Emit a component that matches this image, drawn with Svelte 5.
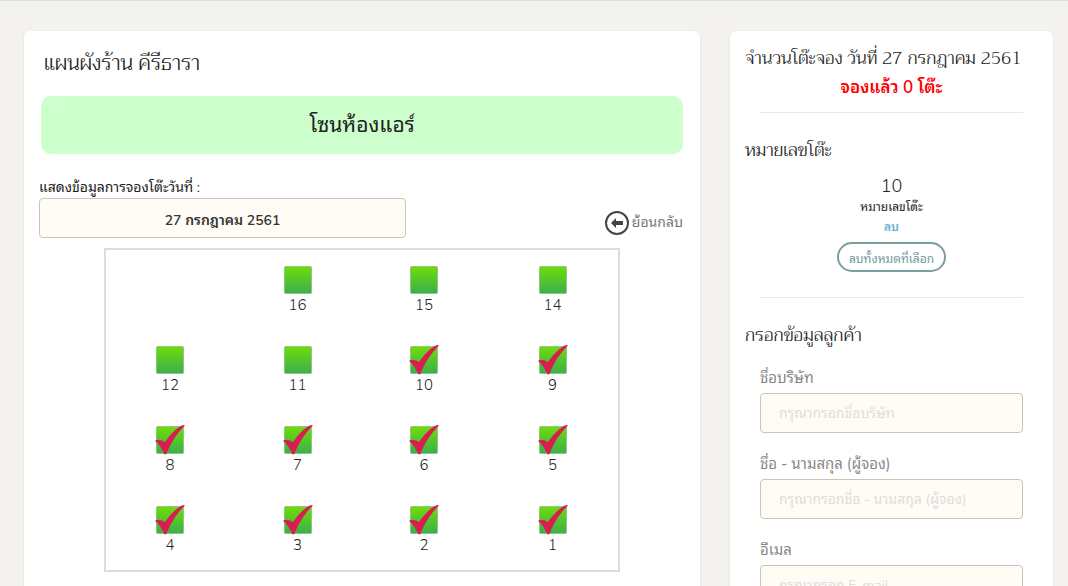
<script lang="ts">
  type Seat = { no: number; checked: boolean } | null;
  type Field = { id: string; label: string; placeholder: string };

  let date = $state('27 กรกฎาคม 2561');

  // null leaves an empty spot on the floor plan
  let seats: Seat[] = $state([
    null,
    { no: 16, checked: false },
    { no: 15, checked: false },
    { no: 14, checked: false },
    { no: 12, checked: false },
    { no: 11, checked: false },
    { no: 10, checked: true },
    { no: 9, checked: true },
    { no: 8, checked: true },
    { no: 7, checked: true },
    { no: 6, checked: true },
    { no: 5, checked: true },
    { no: 4, checked: true },
    { no: 3, checked: true },
    { no: 2, checked: true },
    { no: 1, checked: true }
  ]);

  const fields: Field[] = [
    { id: 'company', label: 'ชื่อบริษัท', placeholder: 'กรุณากรอกชื่อบริษัท' },
    { id: 'name', label: 'ชื่อ - นามสกุล (ผู้จอง)', placeholder: 'กรุณากรอกชื่อ - นามสกุล (ผู้จอง)' },
    { id: 'email', label: 'อีเมล', placeholder: 'กรุณากรอก E-mail' }
  ];
</script>

<div class="page">
  <main class="card plan">
    <h1>แผนผังร้าน คีรีธารา</h1>
    <h2 class="zone">โซนห้องแอร์</h2>

    <div class="toolbar">
      <div class="date">
        <label for="date">แสดงข้อมูลการจองโต๊ะวันที่ :</label>
        <input id="date" class="box" type="text" bind:value={date} />
      </div>
      <a class="back" href="#back">
        <svg width="26" height="26" viewBox="0 0 26 26" aria-hidden="true">
          <circle cx="13" cy="13" r="11" fill="none" stroke="#444" stroke-width="2" />
          <path d="M7 13 L12 8 V11 H19 V15 H12 V18 Z" fill="#444" />
        </svg>
        <span>ย้อนกลับ</span>
      </a>
    </div>

    <div class="floor">
      {#each seats as seat}
        {#if seat}
          <label class="seat">
            <input type="checkbox" bind:checked={seat.checked} />
            <svg width="32" height="32" viewBox="0 0 32 32" aria-hidden="true">
              <defs>
                <linearGradient id="green-{seat.no}" x1="0" y1="0" x2="0" y2="1">
                  <stop offset="0" stop-color="#70dc08" />
                  <stop offset="1" stop-color="#38b04c" />
                </linearGradient>
              </defs>
              <rect x="2.5" y="2.5" width="27" height="27" rx="1" fill="url(#green-{seat.no})" stroke="#8fc48a" />
              {#if seat.checked}
                <path
                  d="M1 17 C3 15 6 15.5 11 18 C16 11 22 4 29 1 L31 1.5 C23 9 16 20 12.5 30 L10.5 30.5 C8 25 5 20 1 17 Z"
                  fill="#da1c52"
                />
              {/if}
            </svg>
            <span>{seat.no}</span>
          </label>
        {:else}
          <span></span>
        {/if}
      {/each}
    </div>
  </main>

  <aside class="card booking">
    <section class="summary">
      <h3>จำนวนโต๊ะจอง วันที่ 27 กรกฎาคม 2561</h3>
      <p class="booked">จองแล้ว 0 โต๊ะ</p>
    </section>
    <hr />
    <section>
      <h3>หมายเลขโต๊ะ</h3>
      <div class="picked">
        <strong>10</strong>
        <span>หมายเลขโต๊ะ</span>
        <a href="#remove">ลบ</a>
        <button type="button">ลบทั้งหมดที่เลือก</button>
      </div>
    </section>
    <hr />
    <form>
      <h3>กรอกข้อมูลลูกค้า</h3>
      {#each fields as field}
        <div class="field">
          <label for={field.id}>{field.label}</label>
          <input id={field.id} class="box" type="text" placeholder={field.placeholder} />
        </div>
      {/each}
    </form>
  </aside>
</div>

<style>
  :global(body) {
    margin: 0;
    background: #f3f2ee;
  }

  .page {
    display: grid;
    grid-template-columns: minmax(0, 1fr) 323px;
    gap: 30px;
    box-sizing: border-box;
    height: 100vh;
    overflow-y: auto;
    scrollbar-width: none;
    padding: 30px 15px 0 24px;
    border-top: 1px solid #ddd;
    color: #222;
    font-family: Nunito, 'Noto Sans Thai Looped', 'Noto Sans', 'Open Sans', sans-serif;
    font-size: 14px;
    line-height: 20px;
  }

  h1,
  h2,
  h3,
  p {
    margin: 0;
    font-weight: 400;
  }

  h1,
  h3 {
    font-family: Trirong, 'Noto Serif Thai', 'Noto Serif', 'Liberation Serif', serif;
    font-weight: 350;
  }

  input,
  button {
    font-family: inherit;
  }

  .card {
    box-sizing: border-box;
    background: #fff;
    border-radius: 6px;
    box-shadow: 0 1px 3px rgba(0, 0, 0, 0.08);
  }

  .plan {
    padding: 16px 17px;
  }

  h1 {
    padding-left: 3px;
    font-size: 21px;
    line-height: 32px;
  }

  .zone {
    margin-top: 17px;
    border-radius: 10px;
    background: #cfc;
    font-size: 21px;
    line-height: 58px;
    text-align: center;
  }

  .toolbar {
    display: flex;
    justify-content: space-between;
    align-items: flex-end;
    margin: 24px 0 0 -2px;
  }

  .date {
    width: 57%;
  }

  .date label {
    display: block;
  }

  .box {
    display: block;
    box-sizing: border-box;
    width: 100%;
    height: 40px;
    padding: 0 18px;
    border: 1px solid #cbc3b6;
    border-radius: 4px;
    background: #fffcf5;
    color: #333;
    font-size: 14px;
  }

  .date .box {
    font-weight: 600;
    text-align: center;
  }

  .back {
    display: flex;
    align-items: center;
    gap: 2px;
    margin-bottom: 2px;
    color: #777;
    text-decoration: none;
  }

  .floor {
    display: grid;
    grid-template-columns: 128fr 127fr 126fr 131fr;
    grid-auto-rows: 80px;
    box-sizing: border-box;
    width: 516px;
    max-width: 100%;
    margin: 10px auto 0;
    border: 2px solid #dcdcdc;
  }

  .seat {
    display: flex;
    flex-direction: column;
    align-items: center;
    padding-top: 14px;
    cursor: pointer;
  }

  .seat input {
    position: absolute;
    opacity: 0;
  }

  .seat span {
    font-size: 15px;
    font-weight: 300;
    line-height: 18px;
  }

  .booking {
    padding: 12px 15px 30px;
  }

  h3 {
    font-size: 18px;
    line-height: 30px;
  }

  .summary h3 {
    white-space: nowrap;
  }

  .booked {
    color: #f00;
    font-size: 17px;
    font-weight: 600;
    line-height: 30px;
    text-align: center;
  }

  hr {
    height: 1px;
    margin: 9px 15px 22px;
    border: 0;
    background: #ece7db;
  }

  .picked {
    display: flex;
    flex-direction: column;
    align-items: center;
    margin: 10px 0 25px;
    font-size: 12px;
  }

  .picked strong {
    font-size: 18px;
    font-weight: 300;
    line-height: 22px;
  }

  .picked a {
    color: #6bb0c9;
    font-weight: 600;
    text-decoration: none;
  }

  .picked button {
    height: 30px;
    margin-top: 5px;
    padding: 0 10px;
    border: 2px solid #7a9fa1;
    border-radius: 15px;
    background: #fff;
    color: #6f9a9c;
    font-size: 12px;
  }

  .field {
    margin: 0 15px 20px;
  }

  .field label {
    display: block;
    padding: 1px 0 5px;
    color: #888;
    font-size: 15px;
  }

  .field .box::placeholder {
    color: #ddd;
  }

  form h3 {
    margin-bottom: 17px;
  }
</style>
